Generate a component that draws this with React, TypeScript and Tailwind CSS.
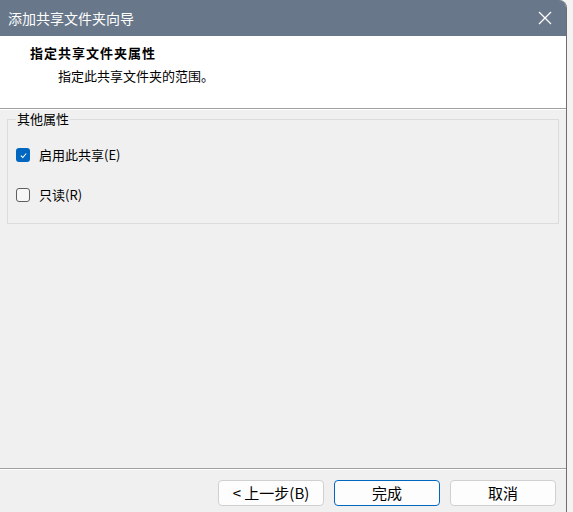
import React from 'react'

const font = { fontFamily: '"Noto Sans CJK SC", "Noto Sans", sans-serif' }

function CheckBox({ checked }: { checked: boolean }) {
  if (checked) {
    return (
      <span className="w-[14px] h-[14px] rounded-[3px] bg-[#0067c0] flex items-center justify-center">
        <svg width="9" height="9" viewBox="0 0 10 10">
          <path d="M2 5.2 L4.2 7.2 L8 2.8" fill="none" stroke="white" strokeWidth="1.2" />
        </svg>
      </span>
    )
  }
  return <span className="w-[14px] h-[14px] rounded-[3px] border border-[#5f5f5f] bg-[#f7f7f7]" />
}

function Btn({ label, primary }: { label: React.ReactNode; primary?: boolean }) {
  return (
    <button
      className={
        'w-[106px] h-[26px] rounded-[4px] text-[15px] text-black flex items-center justify-center ' +
        (primary ? 'border border-[#0067c0] bg-[#fdfdfd]' : 'border border-[#d0d0d0] bg-[#fdfdfd]')
      }
    >
      {label}
    </button>
  )
}

export default function App() {
  return (
    <div className="w-[573px] h-[512px] flex bg-[#f3f3f3] overflow-hidden" style={font}>
      <div className="w-[567px] h-full flex flex-col bg-[#f0f0f0] border-r border-[#6d6d6d] rounded-tr-[8px] overflow-hidden">
        {/* title bar */}
        <div className="h-[36px] bg-[#687789] flex items-center justify-between pl-[8px] pr-[14px] shrink-0">
          <span className="text-white text-[14px]">添加共享文件夹向导</span>
          <svg width="14" height="14" viewBox="0 0 14 14">
            <path d="M1 1 L13 13 M13 1 L1 13" stroke="white" strokeWidth="1.3" />
          </svg>
        </div>

        {/* header */}
        <div className="h-[73px] bg-white border-b border-[#a0a0a0] flex flex-col pl-[30px] pt-[8px] shrink-0">
          <span className="text-[13px] font-bold leading-[18px] text-black tracking-[1px]">指定共享文件夹属性</span>
          <span className="text-[13px] leading-[18px] mt-[5px] ml-[28px] text-black">指定此共享文件夹的范围。</span>
        </div>
        <div className="h-px bg-white shrink-0" />

        {/* body */}
        <div className="flex-1 px-[7px] pt-[1px]">
          <fieldset className="border border-[#dcdcdc] h-[113px] px-[8px] pt-[12px] m-0">
            <legend className="text-[13px] leading-[16px] px-[1px] text-black">其他属性</legend>
            <div className="flex items-center gap-[9px] h-[16px] mt-[8px]">
              <CheckBox checked />
              <span className="text-[13px] text-black">启用此共享(E)</span>
            </div>
            <div className="flex items-center gap-[9px] h-[16px] mt-[24px]">
              <CheckBox checked={false} />
              <span className="text-[13px] text-black">只读(R)</span>
            </div>
          </fieldset>
        </div>

        {/* footer */}
        <div className="shrink-0 border-t border-[#a0a0a0]">
          <div className="h-px bg-white" />
          <div className="h-[42px] flex items-start justify-end gap-[10px] pr-[10px] pt-[10px]">
            <Btn label="< 上一步(B)" />
            <Btn label="完成" primary />
            <Btn label="取消" />
          </div>
        </div>
      </div>
      <div className="flex-1" />
    </div>
  )
}
